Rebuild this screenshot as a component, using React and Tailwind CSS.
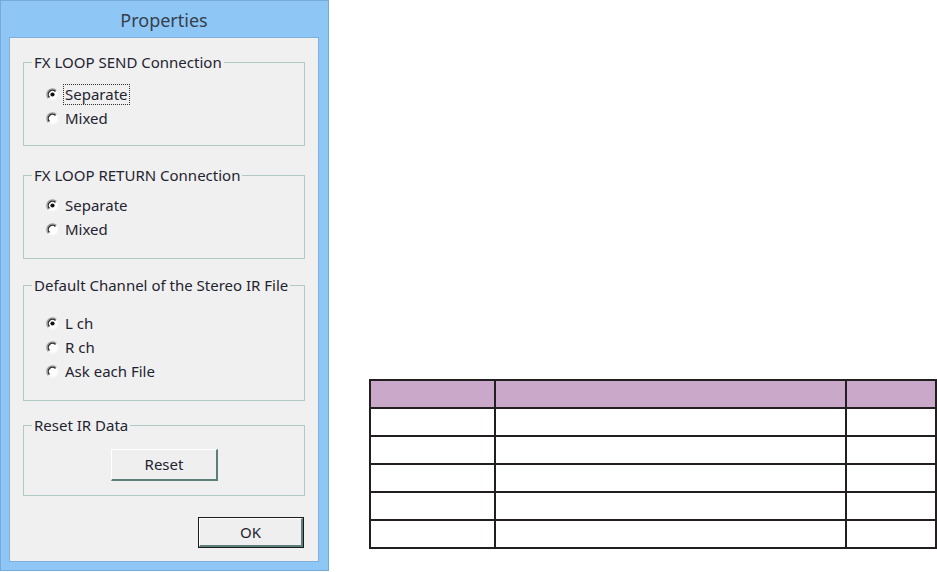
import React from 'react'

function Radio({ checked, label, focused }) {
  return (
    <div className="flex items-center h-[24px]">
      <svg width="13" height="13" viewBox="0 0 13 13" className="ml-[22px] shrink-0">
        <circle cx="6.5" cy="6.5" r="5.6" fill="#ffffff" />
        <path d="M10.5 2.5 A5.6 5.6 0 0 0 2.5 10.5" fill="none" stroke="#9a9a9a" strokeWidth="1.3" />
        <path d="M9.5 3.5 A4.2 4.2 0 0 0 3.5 9.5" fill="none" stroke="#2e2e2e" strokeWidth="1.4" />
        <path d="M2.5 10.5 A5.6 5.6 0 0 0 10.5 2.5" fill="none" stroke="#f6f6f6" strokeWidth="1.3" />
        {checked && <circle cx="6.5" cy="6.5" r="2.1" fill="#111111" />}
      </svg>
      <span
        className={
          'ml-[5px] px-[1px] leading-[19px] text-[15px] text-[#1f2430] ' +
          (focused ? 'outline-1 outline-dotted outline-[#333333]' : '')
        }
      >
        {label}
      </span>
    </div>
  )
}

function Group({ title, className, children }) {
  return (
    <div className={'relative mx-[13px] border border-[#b3c9c6] ' + className}>
      <span className="absolute -top-[11px] left-[8px] bg-[#f0f0f0] px-[2px] text-[15px] leading-[20px] text-[#1f2430]">
        {title}
      </span>
      {children}
    </div>
  )
}

function Win8Button({ label, isDefault, className }) {
  return (
    <div className={'flex ' + (isDefault ? 'border border-[#1b1b1b] ' : '') + className}>
      <div className="flex-1 flex items-center justify-center bg-[#efefef] border-t border-l border-[#ffffff] border-b-2 border-r-2 border-b-[#5d7f7b] border-r-[#5d7f7b] text-[15px] text-[#1f2430]">
        {label}
      </div>
    </div>
  )
}

export default function App() {
  const rows = [0, 1, 2, 3, 4]
  return (
    <div className="flex bg-white w-[937px] h-[572px] overflow-hidden" style={{ fontFamily: '"Noto Sans", "Open Sans", sans-serif' }}>
      <div className="w-[329px] h-[571px] shrink-0 flex flex-col bg-[#8ec6f5] border border-[#74a9d8] pl-[8px] pr-[9px] pb-[8px]">
        <div className="h-[36px] flex items-center justify-center text-[18px] text-[#35404c] pt-[2px]">
          Properties
        </div>
        <div className="flex-1 bg-[#f0f0f0] border border-[#7fb0dc] flex flex-col">
          <Group title="FX LOOP SEND Connection" className="mt-[24px] h-[84px] pt-[19px]">
            <Radio checked label="Separate" focused />
            <Radio label="Mixed" />
          </Group>
          <Group title="FX LOOP RETURN Connection" className="mt-[29px] h-[84px] pt-[17px]">
            <Radio checked label="Separate" />
            <Radio label="Mixed" />
          </Group>
          <Group title="Default Channel of the Stereo IR File" className="mt-[26px] h-[116px] pt-[25px]">
            <Radio checked label="L ch" />
            <Radio label="R ch" />
            <Radio label="Ask each File" />
          </Group>
          <Group title="Reset IR Data" className="mt-[24px] h-[71px] pt-[23px]">
            <Win8Button label="Reset" className="ml-[87px] w-[107px] h-[32px]" />
          </Group>
          <div className="flex justify-end pr-[14px] mt-[21px]">
            <Win8Button label="OK" isDefault className="w-[106px] h-[31px]" />
          </div>
        </div>
      </div>
      <div className="ml-[40px] mt-[379px]">
        <table className="border-collapse w-[568px] border-2 border-[#231f20]">
          <thead>
            <tr className="h-[28px] bg-[#c9a8c9]">
              <th className="w-[125px] border-2 border-[#231f20]"></th>
              <th className="w-[351px] border-2 border-[#231f20]"></th>
              <th className="border-2 border-[#231f20]"></th>
            </tr>
          </thead>
          <tbody>
            {rows.map((r) => (
              <tr key={r} className="h-[28px]">
                <td className="border-2 border-[#231f20]"></td>
                <td className="border-2 border-[#231f20]"></td>
                <td className="border-2 border-[#231f20]"></td>
              </tr>
            ))}
          </tbody>
        </table>
      </div>
    </div>
  )
}
